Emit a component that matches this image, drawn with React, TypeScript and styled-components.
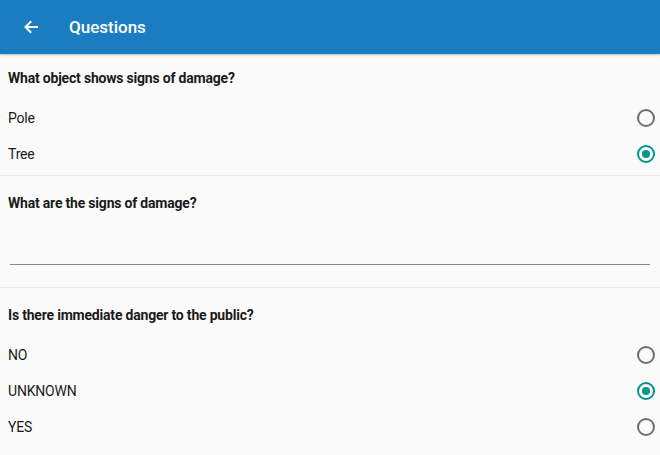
import * as React from 'react';
import styled, { createGlobalStyle } from 'styled-components';

const GlobalStyle = createGlobalStyle`
    html, body {
        margin: 0;
        padding: 0;
        background: #fafafa;
        font-family: Roboto, "Noto Sans", "Liberation Sans", sans-serif;
    }
`;

interface Question {
    title: string;
    options?: string[];
    selected?: number;
}

const questions: Question[] = [
    { title: 'What object shows signs of damage?', options: ['Pole', 'Tree'], selected: 1 },
    { title: 'What are the signs of damage?' },
    { title: 'Is there immediate danger to the public?', options: ['NO', 'UNKNOWN', 'YES'], selected: 1 },
];

const BackArrow = () => (
    <svg width="16" height="16" viewBox="0 0 16 16">
        <path d="M15 8H2.5M8.2 2.3L2.5 8l5.7 5.7" fill="none" stroke="#fff" strokeWidth="2" />
    </svg>
);

export default function App() {
    return (
        <Page>
            <GlobalStyle />
            <Toolbar>
                <BackButton><BackArrow /></BackButton>
                <Title>Questions</Title>
            </Toolbar>
            {questions.map((q, qi) => (
                <Section key={qi} first={qi === 0} last={qi === questions.length - 1}>
                    <QuestionTitle>{q.title}</QuestionTitle>
                    {q.options ? (
                        q.options.map((opt, oi) => (
                            <OptionRow key={oi}>
                                <span>{opt}</span>
                                <Radio checked={oi === q.selected} />
                            </OptionRow>
                        ))
                    ) : (
                        <TextField />
                    )}
                </Section>
            ))}
        </Page>
    );
}

const Page = styled.div`
    width: 660px;
    height: 455px;
    overflow: hidden;
    background: #fafafa;
    color: #1a1a1a;
`;

const Toolbar = styled.div`
    height: 54px;
    background: #1b7dc1;
    display: flex;
    align-items: center;
    box-shadow: 0 1px 2px rgba(0, 0, 0, 0.25);
    position: relative;
`;

const BackButton = styled.div`
    width: 16px;
    height: 16px;
    margin-left: 23px;
    display: flex;
`;

const Title = styled.div`
    margin-left: 30px;
    color: #fff;
    font-size: 17px;
    font-weight: 500;
`;

const Section = styled.div<{ first?: boolean; last?: boolean }>`
    padding: ${props => props.first ? '14px 0 3px' : '17px 0 4px'};
    border-bottom: ${props => props.last ? 'none' : '1px solid #e8e8e8'};
`;

const QuestionTitle = styled.div`
    padding: 0 8px;
    font-size: 14px;
    font-weight: 700;
    line-height: 20px;
    letter-spacing: -0.2px;
    margin-bottom: 12px;
`;

const OptionRow = styled.div`
    height: 36px;
    padding: 0 5px 0 8px;
    display: flex;
    align-items: center;
    justify-content: space-between;
    font-size: 14px;
    letter-spacing: -0.2px;
`;

const Radio = styled.div<{ checked?: boolean }>`
    width: 18px;
    height: 18px;
    box-sizing: border-box;
    border-radius: 50%;
    border: 2px solid ${props => props.checked ? '#009688' : '#6e6e6e'};
    display: flex;
    align-items: center;
    justify-content: center;

    &::after {
        content: '';
        display: ${props => props.checked ? 'block' : 'none'};
        width: 8px;
        height: 8px;
        border-radius: 50%;
        background: #009688;
    }
`;

const TextField = styled.div`
    height: 39px;
    margin: 0 10px 18px;
    border-bottom: 1px solid #8a8a8a;
`;
